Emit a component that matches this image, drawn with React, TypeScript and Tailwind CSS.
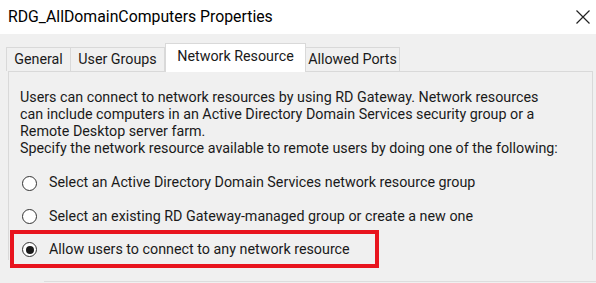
import React from "react";

const font = { fontFamily: 'Roboto, "Noto Sans", sans-serif' };

function Radio({ checked }: { checked?: boolean }) {
  return (
    <span className="relative flex h-[15px] w-[15px] shrink-0 items-center justify-center rounded-full border border-[#333333] bg-white">
      {checked && <span className="h-[8px] w-[8px] rounded-full bg-[#1a1a1a]" />}
    </span>
  );
}

export default function App() {
  return (
    <div
      className="h-[283px] w-[596px] overflow-hidden bg-[#f0f0f0] text-[#1a1a1a] font-['Roboto',sans-serif]"
      style={font}
    >
      {/* Title bar */}
      <div className="flex h-[34px] items-center justify-between bg-white pl-[8px] pr-[5px]">
        <span className="text-[15.8px] text-black">RDG_AllDomainComputers Properties</span>
        <svg width="16" height="16" viewBox="0 0 16 16">
          <path d="M1.5 1.5 L14.5 14.5 M14.5 1.5 L1.5 14.5" stroke="#222" strokeWidth="1.2" fill="none" />
        </svg>
      </div>

      {/* Tabs */}
      <div className="mt-[9px] flex h-[28px] items-end pl-[6px] text-[14.3px]">
        <div className="flex h-[24px] w-[65px] items-center justify-center border border-b-0 border-[#d9d9d9] bg-[#f0f0f0]">
          General
        </div>
        <div className="flex h-[24px] w-[94px] items-center justify-center border border-b-0 border-l-0 border-[#d9d9d9] bg-[#f0f0f0]">
          User Groups
        </div>
        <div className="relative z-10 mb-[-1px] flex h-[29px] w-[141px] items-center justify-center border border-b-0 border-[#d9d9d9] bg-white pb-[3px]">
          Network Resource
        </div>
        <div className="flex h-[24px] w-[94px] items-center justify-center border border-b-0 border-l-0 border-[#d9d9d9] bg-[#f0f0f0]">
          Allowed Ports
        </div>
      </div>

      {/* Panel */}
      <div className="ml-[8px] h-[189px] w-[585px] border border-b-0 border-[#d9d9d9] pl-[11px] pt-[17px] text-[14.3px]">
        <p className="leading-[17px]">
          Users can connect to network resources by using RD Gateway. Network resources
          <br />
          can include computers in an Active Directory Domain Services security group or a
          <br />
          Remote Desktop server farm.
          <br />
          Specify the network resource available to remote users by doing one of the following:
        </p>
        <div className="mt-[9px] flex flex-col">
          <label className="flex h-[34px] items-center gap-[12px] pl-[2px]">
            <Radio />
            <span>Select an Active Directory Domain Services network resource group</span>
          </label>
          <label className="flex h-[33px] items-center gap-[12px] pl-[2px]">
            <Radio />
            <span>Select an existing RD Gateway-managed group or create a new one</span>
          </label>
          <label className="relative flex h-[33px] items-center gap-[12px] pl-[2px]">
            <Radio checked />
            <span>Allow users to connect to any network resource</span>
            <span className="pointer-events-none absolute left-[-10px] top-[-3px] h-[38px] w-[369px] border-[4px] border-[#e8141e]" />
          </label>
        </div>
      </div>
      <div className="ml-[44px] mt-[21px] h-px bg-[#dddddd]" />
    </div>
  );
}
